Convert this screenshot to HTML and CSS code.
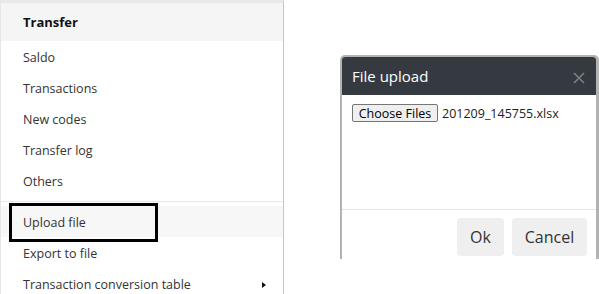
FILE: index.html
```html
<!DOCTYPE html>
<html>
<head>
    <title>Transfer - File upload</title>
    <link rel="stylesheet" href="styles.css">
</head>
<body>
    <div class="page">
        <nav class="menu">
            <div class="menu-head">Transfer</div>
            <ul class="menu-list">
                <li>Saldo</li>
                <li>Transactions</li>
                <li>New codes</li>
                <li>Transfer log</li>
                <li>Others</li>
            </ul>
            <div class="menu-sep"></div>
            <ul class="menu-list">
                <li class="active">Upload file<span class="mark"></span></li>
                <li>Export to file</li>
                <li class="has-sub">Transaction conversion table<span class="arrow"></span></li>
            </ul>
        </nav>

        <div class="dialog">
            <div class="dialog-head">
                <span class="dialog-title">File upload</span>
                <svg class="dialog-close" width="12" height="12" viewBox="0 0 12 12">
                    <path d="M1 1 L11 11 M11 1 L1 11" stroke="#7d8085" stroke-width="1.6"/>
                </svg>
            </div>
            <div class="dialog-body">
                <div class="file-field">
                    <button class="file-btn">Choose Files</button>
                    <span class="file-name">201209_145755.xlsx</span>
                </div>
            </div>
            <div class="dialog-foot">
                <button class="btn btn-ok">Ok</button>
                <button class="btn btn-cancel">Cancel</button>
            </div>
        </div>
    </div>
</body>
</html>
```

FILE: styles.css
```css
body {
    margin: 0;
    background: #fff;
    font-family: "Open Sans", Arial, sans-serif;
}

.page {
    display: flex;
    align-items: flex-start;
    height: 294px;
    overflow: hidden;
}

.menu {
    width: 282px;
    height: 320px;
    border-left: 1px solid #e6e6e6;
    border-right: 1px solid #c4c4c4;
    border-top: 3px solid #e8e8e8;
    flex-shrink: 0;
}

.menu-head {
    height: 37px;
    line-height: 37px;
    padding: 1px 0 0 22px;
    background: #f5f5f5;
    font-size: 13px;
    font-weight: bold;
    color: #111;
}

.menu-list {
    list-style: none;
    margin: 0;
    padding: 0;
}

.menu-list li {
    position: relative;
    height: 28px;
    line-height: 28px;
    padding: 3px 0 0 22px;
    font-size: 12.5px;
    color: #333;
}

.menu-list li.active {
    background: #f7f7f7;
}

.menu-sep {
    margin: 5px 0 4px;
    border-top: 1px solid #e8e8e8;
}

.mark {
    position: absolute;
    left: 8px;
    top: -3px;
    width: 149px;
    height: 39px;
    box-sizing: border-box;
    border: 3px solid #000;
}

.arrow {
    position: absolute;
    right: 17px;
    top: 14px;
    width: 0;
    height: 0;
    border-top: 3.5px solid transparent;
    border-bottom: 3.5px solid transparent;
    border-left: 4px solid #111;
}

.dialog {
    margin: 55px 0 0 56px;
    width: 254px;
    border: 2px solid #b3b3b3;
    border-right-width: 3px;
    border-bottom: none;
    border-radius: 5px 5px 0 0;
    background: #fff;
    flex-shrink: 0;
}

.dialog-head {
    display: flex;
    align-items: center;
    justify-content: space-between;
    height: 38px;
    padding: 0 11px 0 10px;
    background: #353a41;
    border-radius: 3px 3px 0 0;
}

.dialog-title {
    color: #fff;
    font-size: 15px;
}

.dialog-close {
    margin-top: 4px;
}

.dialog-body {
    height: 96px;
    padding: 9px 10px;
}

.file-field {
    display: flex;
    align-items: center;
    gap: 4px;
}

.file-btn {
    height: 18px;
    width: 86px;
    padding: 0;
    border: 1px solid #767676;
    border-radius: 2px;
    background: #efefef;
    font-family: "Open Sans", Arial, sans-serif;
    font-size: 12.5px;
    color: #000;
}

.file-name {
    font-size: 12.5px;
    color: #222;
}

.dialog-foot {
    display: flex;
    justify-content: flex-end;
    gap: 8px;
    padding: 8px 9px 3px;
    border-top: 1px solid #e5e5e5;
}

.btn {
    height: 38px;
    border: none;
    border-radius: 4px;
    background: #efefef;
    font-family: "Open Sans", Arial, sans-serif;
    font-size: 16px;
    color: #333;
}

.btn-ok {
    width: 47px;
}

.btn-cancel {
    width: 75px;
}
```
